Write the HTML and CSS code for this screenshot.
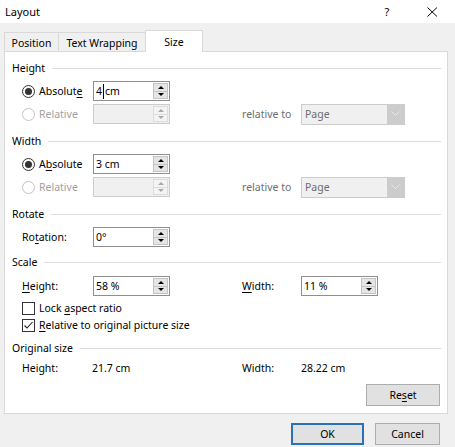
FILE: index.html
```html
<!DOCTYPE html>
<html>
<head>
<meta charset="utf-8">
<link rel="stylesheet" href="styles.css">
</head>
<body>
<div class="titlebar">
  <span class="title">Layout</span>
  <span class="help">?</span>
  <svg class="close" width="11" height="10" viewBox="0 0 11 10"><path d="M0.5 0.5 L10 9.5 M10 0.5 L0.5 9.5" stroke="#000" stroke-width="1" fill="none"/></svg>
</div>
<div class="client">
  <div class="tabs">
    <div class="tab tab-pos">Position</div>
    <div class="tab tab-wrap">Text Wrapping</div>
    <div class="tab tab-size active">Size</div>
  </div>
  <div class="panel">
    <div class="group g-height"><span>Height</span><i class="rule"></i></div>
    <div class="row m1">
      <div class="lead"><span class="radio on"></span><span>Absolut<u>e</u></span></div>
      <div class="spin"><div class="val">4<span class="caret"></span>cm</div><div class="btns"><b class="up"></b><b class="dn"></b></div></div>
    </div>
    <div class="row m2">
      <div class="lead dis"><span class="radio off"></span><span>Relative</span></div>
      <div class="spin disabled"><div class="val"></div><div class="btns"><b class="up"></b><b class="dn"></b></div></div>
      <span class="rlabel gray">relative to</span>
      <div class="select"><span class="sel-text">Page</span><span class="sel-arrow"><svg width="9" height="6" viewBox="0 0 9 6"><path d="M0.5 0.5 L4.5 4.5 L8.5 0.5" stroke="#e6e6e6" stroke-width="1" fill="none"/></svg></span></div>
    </div>

    <div class="group g-next"><span>Width</span><i class="rule"></i></div>
    <div class="row m1">
      <div class="lead"><span class="radio on"></span><span>A<u>b</u>solute</span></div>
      <div class="spin"><div class="val">3 cm</div><div class="btns"><b class="up"></b><b class="dn"></b></div></div>
    </div>
    <div class="row m2">
      <div class="lead dis"><span class="radio off"></span><span>Relative</span></div>
      <div class="spin disabled"><div class="val"></div><div class="btns"><b class="up"></b><b class="dn"></b></div></div>
      <span class="rlabel gray">relative to</span>
      <div class="select"><span class="sel-text">Page</span><span class="sel-arrow"><svg width="9" height="6" viewBox="0 0 9 6"><path d="M0.5 0.5 L4.5 4.5 L8.5 0.5" stroke="#e6e6e6" stroke-width="1" fill="none"/></svg></span></div>
    </div>

    <div class="group g-next"><span>Rotate</span><i class="rule"></i></div>
    <div class="row m1">
      <div class="lead"><span>Ro<u>t</u>ation:</span></div>
      <div class="spin"><div class="val">0°</div><div class="btns"><b class="up"></b><b class="dn"></b></div></div>
    </div>

    <div class="group g-scale"><span>Scale</span><i class="rule"></i></div>
    <div class="row m3">
      <div class="lead"><span><u>H</u>eight:</span></div>
      <div class="spin"><div class="val">58 %</div><div class="btns"><b class="up"></b><b class="dn"></b></div></div>
      <span class="rlabel"><u>W</u>idth:</span>
      <div class="spin"><div class="val">11 %</div><div class="btns"><b class="up"></b><b class="dn"></b></div></div>
    </div>
    <div class="check-row m4"><span class="box"></span><span>Lock <u>a</u>spect ratio</span></div>
    <div class="check-row m5"><span class="box"><svg width="11" height="11" viewBox="0 0 11 11"><path d="M1.5 5.5 L4 8 L9.5 2" stroke="#222" stroke-width="1.1" fill="none"/></svg></span><span><u>R</u>elative to original picture size</span></div>

    <div class="group g-orig"><span>Original size</span><i class="rule"></i></div>
    <div class="row info">
      <div class="lead"><span>Height:</span></div>
      <span class="info-val">21.7 cm</span>
      <span class="rlabel">Width:</span>
      <span class="info-val">28.22 cm</span>
    </div>
    <div class="reset-row"><div class="btn"><span>Re<u>s</u>et</span></div></div>
  </div>
  <div class="footer">
    <div class="btn ok">OK</div>
    <div class="btn cancel">Cancel</div>
  </div>
</div>
</body>
</html>
```

FILE: styles.css
```css
* { box-sizing: border-box; margin: 0; padding: 0; }
html, body { width: 455px; height: 447px; overflow: hidden; }
body {
  font-family: "Noto Sans", sans-serif;
  font-size: 10.5px;
  color: #000;
  background: #f0f0f0;
}
u { text-decoration: underline; text-underline-offset: 2px; }

.titlebar {
  height: 23px;
  background: #fff;
  display: flex;
  align-items: center;
  padding-left: 5px;
}
.title { flex: 1; font-size: 11px; }
.help { width: 10px; text-align: center; font-size: 11px; margin-right: 35px; }
.close { margin-right: 17px; }

.client { padding: 0 7px 0 4px; }

.tabs {
  margin-top: 7px;
  height: 21px;
  display: flex;
  align-items: flex-end;
  position: relative;
  z-index: 1;
}
.tab {
  height: 19px;
  line-height: 19px;
  padding-top: 1px;
  text-align: center;
  border: 1px solid #d9d9d9;
  border-bottom: none;
  background: #f0f0f0;
}
.tab-pos { width: 54px; border-right: none; }
.tab-wrap { width: 88px; }
.tab-size { width: 58px; border-left: none; }
.tab.active {
  height: 22px;
  line-height: 21px;
  padding-top: 1px;
  margin-bottom: -1px;
  background: #fff;
  border-left: 1px solid #d9d9d9;
  margin-left: -1px;
}

.panel {
  width: 444px;
  height: 363px;
  background: #fff;
  border: 1px solid #d9d9d9;
  padding: 0 6px 0 7px;
}

.group {
  height: 16px;
  display: flex;
  align-items: center;
}
.group .rule {
  flex: 1;
  height: 1px;
  background: #dcdcdc;
  margin-left: 7px;
}
.g-height { margin-top: 8px; }
.g-next { margin-top: 8px; }
.g-scale { margin-top: 6px; }
.g-orig { margin-top: 7px; }

.row {
  height: 22px;
  display: flex;
  align-items: center;
  padding-left: 10px;
}
.m1 { margin-top: 4px; }
.m2 { margin-top: 1px; }
.m3 { margin-top: 5px; }

.lead {
  width: 71px;
  display: flex;
  align-items: center;
}
.lead.dis { color: #a0a0a0; }

.radio {
  width: 13px;
  height: 13px;
  border-radius: 50%;
  border: 1px solid #333;
  margin-right: 4px;
  display: flex;
  align-items: center;
  justify-content: center;
  background: #fff;
}
.radio.on::after {
  content: "";
  width: 7px;
  height: 7px;
  border-radius: 50%;
  background: #333;
}
.radio.off { border-color: #c3c3c3; }

.spin {
  width: 77px;
  height: 20px;
  border: 1px solid #8f8f8f;
  display: flex;
  background: #fff;
}
.spin .val {
  flex: 1;
  padding-left: 2px;
  line-height: 18px;
  display: flex;
  align-items: center;
}
.caret {
  display: inline-block;
  width: 1px;
  height: 15px;
  background: #000;
  margin: 0 1px 0 1px;
}
.btns {
  width: 15px;
  margin: 1px 1px 1px 0;
  display: flex;
  flex-direction: column;
  border: 1px solid #c4c4c4;
  background: #e5e5e5;
}
.btns b {
  flex: 1;
  display: flex;
  align-items: center;
  justify-content: center;
}
.btns .up { border-bottom: 1px solid #c4c4c4; }
.btns .up::after {
  content: "";
  border-left: 3px solid transparent;
  border-right: 3px solid transparent;
  border-bottom: 3px solid #000;
}
.btns .dn::after {
  content: "";
  border-left: 3px solid transparent;
  border-right: 3px solid transparent;
  border-top: 3px solid #000;
}
.spin.disabled { border-color: #cccccc; background: #f0f0f0; }
.spin.disabled .btns { border-color: #dcdcdc; background: #f4f4f4; }
.spin.disabled .btns .up { border-bottom-color: #dcdcdc; }
.spin.disabled .btns .up::after { border-bottom-color: #a8a8a8; }
.spin.disabled .btns .dn::after { border-top-color: #a8a8a8; }

.rlabel {
  margin-left: 72px;
  width: 59px;
}
.rlabel.gray { color: #6d6d6d; }

.select {
  width: 104px;
  height: 21px;
  border: 1px solid #cccccc;
  background: #f0f0f0;
  display: flex;
  align-items: stretch;
}
.sel-text {
  flex: 1;
  padding-left: 3px;
  color: #6d6d6d;
  display: flex;
  align-items: center;
}
.sel-arrow {
  width: 17px;
  background: #cccccc;
  display: flex;
  align-items: center;
  justify-content: center;
}

.check-row {
  height: 16px;
  display: flex;
  align-items: center;
  padding-left: 10px;
}
.m4 { margin-top: 3px; }
.m5 { margin-top: 1px; }
.box {
  width: 13px;
  height: 13px;
  border: 1px solid #333;
  margin-right: 4px;
  display: flex;
  align-items: center;
  justify-content: center;
  background: #fff;
}

.row.info { height: 16px; margin-top: 4px; }
.info-val { width: 77px; }
.info .lead { width: 70px; }
.info .rlabel { margin-left: 73px; }

.reset-row {
  margin-top: 8px;
  display: flex;
  justify-content: flex-end;
  padding-right: 1px;
}

.btn {
  height: 22px;
  border: 1px solid #adadad;
  background: #e1e1e1;
  display: flex;
  align-items: center;
  justify-content: center;
}
.reset-row .btn { width: 74px; }

.footer {
  margin-top: 9px;
  display: flex;
  justify-content: flex-end;
  gap: 11px;
  padding-right: 8px;
}
.btn.ok { width: 73px; border: 2px solid #2a72b8; }
.btn.cancel { width: 65px; }
```
